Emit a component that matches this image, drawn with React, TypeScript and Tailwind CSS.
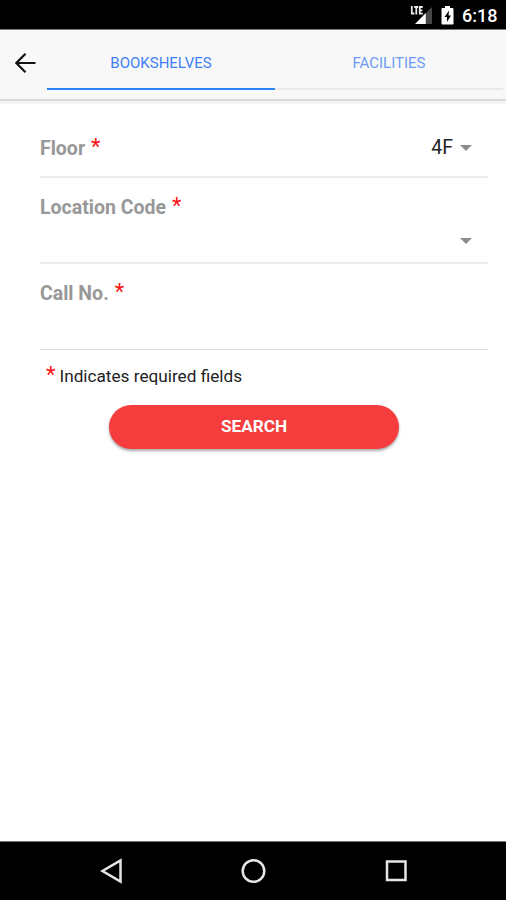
import type { ReactNode } from 'react'

function StatusBar() {
  return (
    <div className="flex h-[30px] shrink-0 justify-end border-b border-[#777] bg-black pr-[9px] text-white">
      <svg width="24" height="29" viewBox="0 0 24 29" className="mr-[7px]">
        <path d="M22 7v17h-6V13z" fill="#474747" />
        <path d="M5 24 15.800 13v11z" fill="#fff" />
        <path
          d="M1.8 6v7.500h2.600M4.200 7h4M6.300 7v7.500M12.800 7H9.800v6.600h3M9.800 10.300h2.600"
          fill="none"
          stroke="#e8e8e8"
          strokeWidth="1.800"
        />
      </svg>
      <svg width="13" height="29" viewBox="0 0 13 29" className="mr-[8px]">
        <path d="M4 6h5v2h2.500q1 0 1 1v14.500q0 1-1 1h-10q-1 0-1-1V9q0-1 1-1H4z" fill="#fff" />
        <path d="M8 10.500 3.500 17H6v5l4-6.500H7.500z" fill="#000" />
      </svg>
      <span className="w-[35px] text-[18px] font-medium leading-[32px] whitespace-nowrap">6:18</span>
    </div>
  )
}

function Header() {
  return (
    <header className="flex h-[71px] shrink-0 border-b-2 border-[#dadada] bg-[#f8f8f8] pr-[3px] shadow-[0_3px_0_#f4f4f4]">
      <button className="flex h-[66px] w-[47px] items-center pl-[15px]">
        <svg width="22" height="22" viewBox="0 0 22 22" fill="none" stroke="#111" strokeWidth="2.200">
          <path d="M20.500 11H1.500M10.500 1.700 1.300 11l9.200 9.300" />
        </svg>
      </button>
      <nav className="grid h-[60px] flex-1 grid-cols-2 text-center text-[15px]">
        <a className="h-[60px] border-b-2 border-[#2a83f0] pt-[21px] leading-6 text-[#3f80f5]">BOOKSHELVES</a>
        <a className="h-[60px] border-b-2 border-[#e9e9e9] pt-[21px] leading-6 text-[#6c9cf6]">FACILITIES</a>
      </nav>
    </header>
  )
}

function Required() {
  return <span className="text-[22px] leading-6 font-normal text-[#fb1515]">*</span>
}

function Caret() {
  return (
    <svg width="12" height="6" viewBox="0 0 12 6" fill="#8c8c8c">
      <path d="M0 0h12L6 6z" />
    </svg>
  )
}

function Label({ children }: { children: ReactNode }) {
  return (
    <label className="flex h-6 gap-[6px] text-[19.500px] font-bold leading-[27px] whitespace-nowrap text-[#989898]">
      {children}
      <Required />
    </label>
  )
}

export default function App() {
  return (
    <div className="flex h-[900px] w-[506px] flex-col overflow-hidden bg-white font-['Roboto',sans-serif]">
      <StatusBar />
      <Header />

      <main className="flex flex-1 flex-col pl-[40px] pr-[18px]">
        <div className="flex h-[77px] items-start justify-between border-b-2 border-[#eaeaea] pt-[34px] pr-[16px]">
          <Label>Floor</Label>
          <div className="flex h-[25px] items-center gap-[7px] text-[19.500px] text-[#222]">
            4F
            <Caret />
          </div>
        </div>
        <div className="flex h-[86px] flex-col border-b-2 border-[#eaeaea] pt-[16px] pr-[16px]">
          <Label>Location Code</Label>
          <div className="mt-[20px] flex justify-end">
            <Caret />
          </div>
        </div>
        <div className="h-[86px] border-b border-[#dedede] pt-[16px]">
          <Label>Call No.</Label>
        </div>

        <p className="mt-[14px] flex h-6 gap-[4px] pl-[6px] text-[17.200px] leading-6 whitespace-nowrap text-[#222]">
          <span className="text-[22px] leading-[22px] text-[#fb1515]">*</span>
          Indicates required fields
        </p>

        <button className="mt-[17px] ml-[69px] h-[44px] w-[290px] rounded-full bg-[#f53d3d] pb-[2px] text-[17.200px] font-bold leading-[42px] text-white shadow-[0_2px_3px_rgba(0,0,0,0.35)]">
          SEARCH
        </button>
      </main>

      <footer className="h-[59px] shrink-0 border-t border-[#777] bg-black">
        <svg width="506" height="58" viewBox="0 0 506 58" fill="none" stroke="#e6e6e6" strokeWidth="2.500">
          <path d="M120.500 18.500v21L102.500 29z" />
          <circle cx="253.500" cy="29" r="10.800" />
          <path d="M387 19.500h18.500v18.500H387z" />
        </svg>
      </footer>
    </div>
  )
}
